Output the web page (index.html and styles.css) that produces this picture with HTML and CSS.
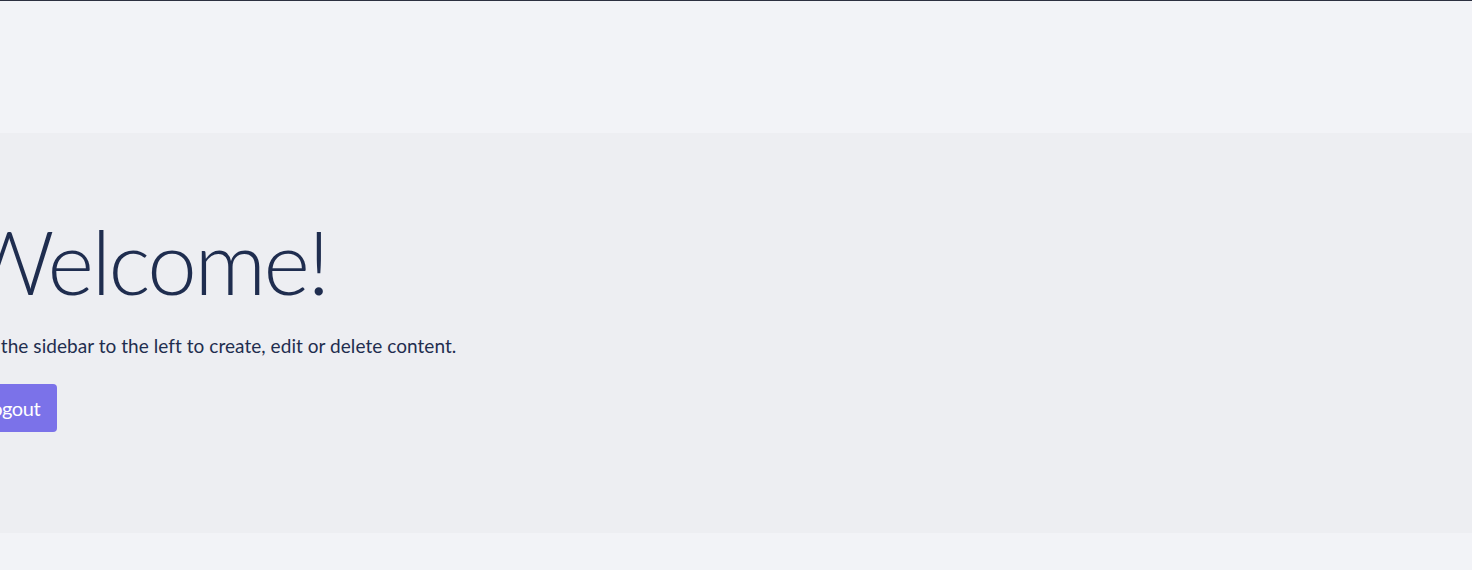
FILE: index.html
```html
<!DOCTYPE html>
<html lang="en">
<head>
  <meta charset="UTF-8">
  <meta name="viewport" content="width=device-width, initial-scale=1.0">
  <title>Admin</title>
  <link rel="stylesheet" href="styles.css">
</head>
<body>
  <div class="topline"></div>
  <header class="navbar"></header>

  <!-- Welcome panel -->
  <section class="jumbotron">
    <div class="container">
      <h1 class="display">Welcome!</h1>
      <p class="lead">Use the sidebar to the left to create, edit or delete content.</p>
      <a class="btn" href="#">Logout</a>
    </div>
  </section>
</body>
</html>
```

FILE: styles.css
```css
body {
  margin: 0;
  font-family: 'Lato', 'Noto Sans', sans-serif;
  background: #f2f3f7;
  color: #1f2d4f;
  overflow: hidden;
}

.topline {
  height: 1px;
  background: #2c3040;
}

.navbar {
  height: 132px;
  background: #f2f3f7;
}

.jumbotron {
  height: 400px;
  box-sizing: border-box;
  padding-top: 83px;
  background: #edeef2;
}

.container {
  margin-left: -36px;
}

.display {
  margin: 0;
  font-size: 89px;
  font-weight: 300;
  line-height: 1;
  letter-spacing: -2.5px;
}

.lead {
  margin: 27px 0 23px;
  font-size: 19px;
  line-height: 1.5;
  letter-spacing: 0.05px;
}

.btn {
  display: inline-block;
  padding: 0 17px 0 18px;
  height: 48px;
  line-height: 48px;
  font-size: 20px;
  letter-spacing: -0.4px;
  color: #fff;
  background: #7b72e9;
  border-radius: 4px;
  text-decoration: none;
}
```
